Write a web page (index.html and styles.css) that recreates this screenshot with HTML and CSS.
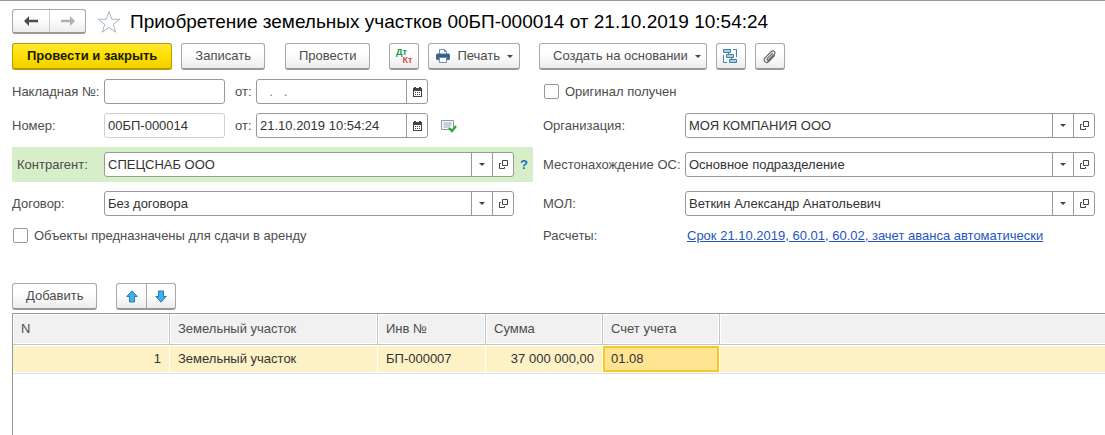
FILE: index.html
```
<!DOCTYPE html>
<html lang="ru">
<head>
    <meta charset="UTF-8">
    <meta name="viewport" content="width=device-width, initial-scale=1.0">
    <title>Приобретение земельных участков</title>
    <link rel="stylesheet" href="styles.css">
</head>
<body>

<header class="titlebar">
    <div class="btn-group">
        <button type="button" class="nav-btn" aria-label="Назад">
            <svg width="14" height="10" viewBox="0 0 14 10"><path d="M0 5L5 0v3.800h9v2.400H5V10z" fill="#4d4d4d"/></svg>
        </button>
        <button type="button" class="nav-btn" aria-label="Вперед">
            <svg width="14" height="10" viewBox="0 0 14 10"><path d="M14 5L9 0v3.800H0v2.400h9V10z" fill="#b0b0b0"/></svg>
        </button>
    </div>
    <button type="button" class="star" aria-label="В избранное">
        <svg width="24" height="24" viewBox="0 0 24 24"><path d="M12 1.500l2.700 7.700 8.200.1-6.600 5 2.400 7.900-6.700-4.700-6.700 4.700 2.400-7.900-6.600-5 8.200-.1z" fill="#fff" stroke="#a9b4c0"/></svg>
    </button>
    <h1>Приобретение земельных участков 00БП-000014 от 21.10.2019 10:54:24</h1>
</header>

<div class="toolbar">
    <button type="button" class="btn btn-main">Провести и закрыть</button>
    <button type="button" class="btn">Записать</button>
    <button type="button" class="btn btn-post">Провести</button>
    <button type="button" class="btn btn-icon btn-dtkt"><span class="dt">Дт</span><span class="kt">Кт</span></button>
    <button type="button" class="btn btn-print">
        <svg width="14" height="14" viewBox="0 0 14 14"><path d="M3.500 5V.5h5l2 2V5" fill="#fff" stroke="#6d8cab"/><path d="M8.500.5v2h2" fill="none" stroke="#6d8cab"/><path d="M1 4.500h12l1 1V10l-1 1H1l-1-1V5.500z" fill="#426b93"/><path d="M1 7h12" stroke="#264f78"/><path d="M3.500 8.500h7v5h-7z" fill="#fff" stroke="#6d8cab"/></svg>
        Печать
        <svg width="6" height="3" viewBox="0 0 6 3"><path d="M0 0h6L3 3z" fill="#444"/></svg>
    </button>
    <button type="button" class="btn btn-create">
        Создать на основании
        <svg width="6" height="3" viewBox="0 0 6 3"><path d="M0 0h6L3 3z" fill="#444"/></svg>
    </button>
    <button type="button" class="btn btn-icon" aria-label="Структура подчиненности">
        <svg width="15" height="15" viewBox="0 0 15 15" fill="none" stroke="#4380a8"><path d="M.5.5h7v3h-7zM3.500 5.500h7v3h-7zM6.500 10.500h7v3h-7z" fill="#a9cfe8"/><path d="M10 .5h3.500V8M.5 6v7.500H4M5.500 3.500v2M8.500 8.500v2"/></svg>
    </button>
    <button type="button" class="btn btn-icon" aria-label="Присоединенные файлы">
        <svg width="15" height="15" viewBox="0 0 15 15" fill="none" stroke="#666" stroke-width="1.200" stroke-linecap="round"><path d="M10.500 4.500L5.300 9.700c-.9.900.4 2.100 1.300 1.200l5.600-5.600c2-2-.8-4.800-2.800-2.800L3 8.900c-2.600 2.600 1.100 6.200 3.700 3.600L12.500 6.700"/></svg>
    </button>
</div>

<form class="fields">
    <div class="column">
        <div class="row">
            <label class="name" for="invoice">Накладная №:</label>
            <input class="box short" type="text" id="invoice">
            <label class="from" for="invoiceDate">от:</label>
            <div class="box date">
                <input class="empty-date" type="text" id="invoiceDate" value="  .   .">
                <button type="button" aria-label="Выбрать дату">
                    <svg width="9" height="10" viewBox="0 0 9 10"><path d="M0 1h1V0h2v1h3V0h2v1h1v9H0z" fill="#444"/><path d="M1 4h7v5H1z" fill="#fff"/><path d="M2 5.500h5M2 7.500h5" stroke="#444" stroke-dasharray="1 1"/></svg>
                </button>
            </div>
        </div>
        <div class="row">
            <label class="name" for="number">Номер:</label>
            <input class="box short locked" type="text" id="number" value="00БП-000014" readonly>
            <label class="from" for="docDate">от:</label>
            <div class="box date">
                <input type="text" id="docDate" value="21.10.2019 10:54:24">
                <button type="button" aria-label="Выбрать дату">
                    <svg width="9" height="10" viewBox="0 0 9 10"><path d="M0 1h1V0h2v1h3V0h2v1h1v9H0z" fill="#444"/><path d="M1 4h7v5H1z" fill="#fff"/><path d="M2 5.500h5M2 7.500h5" stroke="#444" stroke-dasharray="1 1"/></svg>
                </button>
            </div>
            <svg class="posted" width="16" height="14" viewBox="0 0 16 14" fill="none"><path d="M.5 1.500h12v9H.5z" fill="#f6f8fa" stroke="#8a9aa8"/><path d="M2.500 4h8M2.500 6h8M2.500 8h6" stroke="#9aa7b3"/><path d="M8 9l3 3 4-5" stroke="#2faa37" stroke-width="2.400"/></svg>
        </div>
        <div class="row partner">
            <label class="name" for="partner">Контрагент:</label>
            <div class="box combo">
                <select id="partner"><option>СПЕЦСНАБ ООО</option></select>
                <button type="button" aria-label="Открыть">
                    <svg width="9" height="9" viewBox="0 0 9 9" fill="none" stroke="#444"><path d="M3.500.5h5v5h-5zM2 3.500H.5v5h5V7"/></svg>
                </button>
            </div>
            <a class="help" href="#">?</a>
        </div>
        <div class="row contract">
            <label class="name" for="contract">Договор:</label>
            <div class="box combo">
                <select id="contract"><option>Без договора</option></select>
                <button type="button" aria-label="Открыть">
                    <svg width="9" height="9" viewBox="0 0 9 9" fill="none" stroke="#444"><path d="M3.500.5h5v5h-5zM2 3.500H.5v5h5V7"/></svg>
                </button>
            </div>
        </div>
        <div class="row last">
            <input type="checkbox" id="rent">
            <label for="rent">Объекты предназначены для сдачи в аренду</label>
        </div>
    </div>

    <div class="column right">
        <div class="row">
            <input type="checkbox" id="original">
            <label for="original">Оригинал получен</label>
        </div>
        <div class="row">
            <label class="name" for="org">Организация:</label>
            <div class="box combo">
                <select id="org"><option>МОЯ КОМПАНИЯ ООО</option></select>
                <button type="button" aria-label="Открыть">
                    <svg width="9" height="9" viewBox="0 0 9 9" fill="none" stroke="#444"><path d="M3.500.5h5v5h-5zM2 3.500H.5v5h5V7"/></svg>
                </button>
            </div>
        </div>
        <div class="row">
            <label class="name" for="place">Местонахождение ОС:</label>
            <div class="box combo">
                <select id="place"><option>Основное подразделение</option></select>
                <button type="button" aria-label="Открыть">
                    <svg width="9" height="9" viewBox="0 0 9 9" fill="none" stroke="#444"><path d="M3.500.5h5v5h-5zM2 3.500H.5v5h5V7"/></svg>
                </button>
            </div>
        </div>
        <div class="row">
            <label class="name" for="mol">МОЛ:</label>
            <div class="box combo">
                <select id="mol"><option>Веткин Александр Анатольевич</option></select>
                <button type="button" aria-label="Открыть">
                    <svg width="9" height="9" viewBox="0 0 9 9" fill="none" stroke="#444"><path d="M3.500.5h5v5h-5zM2 3.500H.5v5h5V7"/></svg>
                </button>
            </div>
        </div>
        <div class="row last">
            <span class="name">Расчеты:</span>
            <a class="terms" href="#">Срок 21.10.2019, 60.01, 60.02, зачет аванса автоматически</a>
        </div>
    </div>
</form>

<div class="commands">
    <button type="button" class="btn">Добавить</button>
    <div class="btn-group">
        <button type="button" class="move-btn" aria-label="Вверх">
            <svg width="12" height="13" viewBox="0 0 12 13"><path d="M6 .8L11.200 6.500H8.500v5.500h-5V6.500H.8z" fill="#41b0ee" stroke="#2c7aa8"/></svg>
        </button>
        <button type="button" class="move-btn" aria-label="Вниз">
            <svg width="12" height="13" viewBox="0 0 12 13"><path d="M6 12.200L11.200 6.500H8.500V1h-5v5.500H.8z" fill="#41b0ee" stroke="#2c7aa8"/></svg>
        </button>
    </div>
</div>

<div class="grid">
    <table>
        <thead>
            <tr>
                <th class="c-num">N</th>
                <th class="c-land">Земельный участок</th>
                <th class="c-inv">Инв №</th>
                <th class="c-sum">Сумма</th>
                <th class="c-acc">Счет учета</th>
                <th></th>
            </tr>
        </thead>
        <tbody>
            <tr>
                <td class="right-text">1</td>
                <td>Земельный участок</td>
                <td>БП-000007</td>
                <td class="right-text">37 000 000,00</td>
                <td class="current">01.08</td>
                <td></td>
            </tr>
        </tbody>
    </table>
</div>

</body>
</html>
```
FILE: styles.css
```
* {
    box-sizing: border-box;
}
body {
    margin: 0;
    min-height: 100vh;
    display: flex;
    flex-direction: column;
    border-top: 1px solid #999;
    background: #fff;
    color: #4d4d4d;
    font-family: "Liberation Sans", Arial, sans-serif;
    font-size: 13px;
    line-height: 16px;
}
button, input, select {
    font: inherit;
    color: inherit;
    margin: 0;
}
button {
    display: flex;
    align-items: center;
    justify-content: center;
    padding: 0;
    border: none;
    background: none;
    cursor: pointer;
}

/* title */
.titlebar {
    display: flex;
    align-items: center;
    padding: 8px 12px 0;
}
h1 {
    margin: 0 0 0 9px;
    font-size: 19px;
    line-height: 24px;
    font-weight: normal;
    color: #000;
}
.star {
    margin-left: 11px;
}
.btn, .btn-group {
    border: 1px solid #a8a8a8;
    border-bottom: 2px solid #999;
    border-radius: 3px;
    background: linear-gradient(#fff 40%, #ececec);
}
.btn-group {
    display: flex;
}
.btn-group button + button {
    border-left: 1px solid #ccc;
}
.nav-btn {
    width: 36px;
    height: 22px;
}
.move-btn {
    width: 29px;
    height: 24px;
}
.btn-group .move-btn + .move-btn {
    border-left-color: #a8a8a8;
}

/* toolbars */
.toolbar {
    display: flex;
    padding: 9px 12px 0;
}
.btn {
    height: 27px;
    padding: 0 13px;
    margin-right: 9px;
    white-space: nowrap;
}
.btn-main {
    padding: 0 14px;
    border-color: #b39b00;
    background: linear-gradient(#ffe838, #ffdf00 50%, #f0d000);
    color: #1a1a00;
    font-weight: bold;
}
.btn-post {
    margin-left: 11px;
    margin-right: 19px;
}
.btn-icon {
    width: 30px;
    padding: 0;
}
.btn-dtkt {
    flex-direction: column;
    font-size: 9px;
    line-height: 8px;
    font-weight: bold;
}
.dt {
    padding-right: 6px;
    color: #0f9650;
}
.kt {
    padding-left: 6px;
    color: #e04848;
}
.btn-print {
    gap: 7px;
    padding: 0 6px 0 7px;
    margin-right: 19px;
}
.btn-create {
    gap: 7px;
    padding-right: 5px;
}

/* form */
.fields {
    display: grid;
    grid-template-columns: 521px minmax(0, 1fr);
    column-gap: 10px;
    padding: 9px 10px 0 12px;
}
.row {
    display: flex;
    align-items: center;
    height: 25px;
    margin-bottom: 9px;
}
.name {
    flex: none;
    width: 92px;
    white-space: nowrap;
}
.right .name {
    width: 142px;
}
.box {
    height: 25px;
    border: 1px solid #999;
    border-radius: 3px;
    background: #fff;
    color: #333;
}
input.box {
    padding: 0 3px;
}
.short {
    width: 121px;
}
.box.locked {
    border-color: #d0d0d0;
}
.from {
    width: 31px;
    padding-left: 10px;
}
.date {
    display: flex;
    width: 172px;
}
.combo {
    display: flex;
    flex: 1;
    min-width: 0;
}
.box input, .box select {
    flex: 1;
    min-width: 0;
    padding: 0 3px;
    border: none;
    background: none;
    outline: none;
}
.box .empty-date {
    padding-left: 5px;
    color: #4a7fa5;
    white-space: pre;
}
.box select {
    appearance: none;
    padding-right: 24px;
    background: url("data:image/svg+xml,%3Csvg xmlns='http://www.w3.org/2000/svg' width='21' height='23'%3E%3Cpath d='M.5 0v23' stroke='%23999'/%3E%3Cpath d='M8 10h6l-3 3z' fill='%23444'/%3E%3C/svg%3E") no-repeat right center;
}
.box button {
    width: 21px;
    border-left: 1px solid #999;
}
.posted {
    margin-left: 13px;
}
.column .row:nth-child(2), .column .row:nth-child(3) {
    margin-bottom: 14px;
}
.partner {
    height: 35px;
    margin-top: -5px;
    padding-left: 5px;
    background: #d7efc9;
}
.column .partner:nth-child(3) {
    margin-bottom: 9px;
}
.partner .name {
    width: 87px;
}
.contract {
    padding-right: 19px;
}
.help {
    width: 19px;
    padding-left: 6px;
    color: #1a6fb5;
    font-weight: bold;
    text-decoration: none;
}
.column .row:nth-child(4) {
    margin-bottom: 7px;
}
input[type="checkbox"] {
    appearance: none;
    width: 15px;
    height: 15px;
    margin: 0 6px 0 1px;
    border: 1px solid #999;
    border-radius: 2px;
    background: #fff;
}
.column .last {
    margin-bottom: 0;
}
.terms {
    padding-left: 2px;
    color: #1f55c0;
}

/* table part */
.commands {
    display: flex;
    gap: 10px;
    padding: 35px 12px 3px;
}
.grid {
    flex: 1;
    margin-left: 12px;
    border: solid #999;
    border-width: 1px 0 0 1px;
}
table {
    width: 100%;
    table-layout: fixed;
    border-collapse: separate;
    border-spacing: 0;
}
th, td {
    padding: 0 8px;
    text-align: left;
    font-weight: normal;
    white-space: nowrap;
}
th {
    height: 31px;
    border-right: 1px solid #c4c4c4;
    border-bottom: 1px solid #c4c4c4;
    background: #f1f1f1;
    box-shadow: inset 0 0 0 1px #fff;
}
td {
    height: 29px;
    border-right: 1px solid #fff;
    border-bottom: 1px solid #e0e0e0;
    background: #fdf1c6;
    box-shadow: inset 0 1px #fff, inset 0 -1px #fff;
    color: #333;
}
th:last-child, td:last-child {
    border-right: none;
}
th:last-child {
    box-shadow: inset 1px 1px #fff, inset 0 -1px #fff;
}
.right-text {
    text-align: right;
}
.c-num {
    width: 157px;
}
.c-land {
    width: 208px;
}
.c-inv {
    width: 108px;
}
.c-sum, .c-acc {
    width: 117px;
}
.current {
    background: #ffe591;
    box-shadow: inset 0 1px #fff, inset 0 -1px #fff, inset 2px 3px #f9c823, inset -2px -3px #f9c823;
}
```
